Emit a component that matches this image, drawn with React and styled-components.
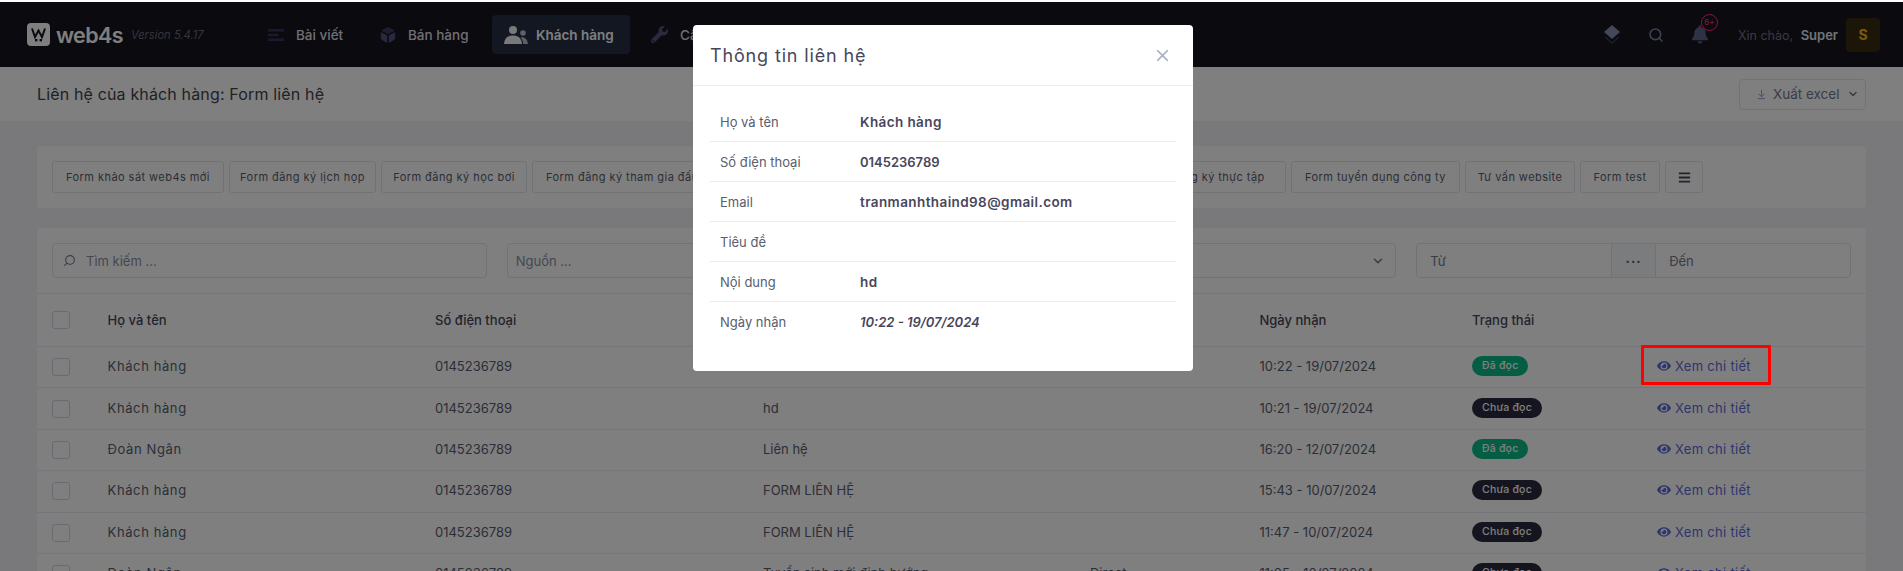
import React from "react";
import styled, { createGlobalStyle } from "styled-components";
import { FaEye, FaBell, FaWrench, FaBars } from "react-icons/fa";
import { Search, ChevronDown, X, ArrowDownToLine } from "lucide-react";

const GlobalStyle = createGlobalStyle`
  html, body {
    margin: 0;
    padding: 0;
    background: #fff;
    overflow: hidden;
  }
  * {
    box-sizing: border-box;
  }
  body {
    font-family: Inter, "Noto Sans", sans-serif;
    font-size: 13px;
    color: #595d6e;
  }
`;

const forms = [
  { label: "Form khảo sát web4s mới", w: 172 },
  { label: "Form đăng ký lịch họp", w: 147 },
  { label: "Form đăng ký học bơi", w: 146 },
  { label: "Form đăng ký tham gia đấu giá", w: 230, start: true },
  { label: "Form đăng ký tuyển sinh", w: 180 },
  { label: "Form đăng ký tư vấn", w: 160 },
  { label: "Form đăng ký thực tập", w: 169 },
  { label: "Form tuyển dụng công ty", w: 169 },
  { label: "Tư vấn website", w: 110 },
  { label: "Form test", w: 80 },
];

const rows = [
  { name: "Khách hàng", content: "hd", source: "", date: "10:22 - 19/07/2024", read: true },
  { name: "Khách hàng", content: "hd", source: "", date: "10:21 - 19/07/2024", read: false },
  { name: "Đoàn Ngân", content: "Liên hệ", source: "", date: "16:20 - 12/07/2024", read: true },
  { name: "Khách hàng", content: "FORM LIÊN HỆ", source: "", date: "15:43 - 10/07/2024", read: false },
  { name: "Khách hàng", content: "FORM LIÊN HỆ", source: "", date: "11:47 - 10/07/2024", read: false },
  { name: "Đoàn Ngân", content: "Tuyển sinh mới định hướng", source: "Direct", date: "11:05 - 10/07/2024", read: false },
];

const details = [
  { label: "Họ và tên", value: "Khách hàng" },
  { label: "Số điện thoại", value: "0145236789", numeric: true },
  { label: "Email", value: "tranmanhthaind98@gmail.com" },
  { label: "Tiêu đề", value: "" },
  { label: "Nội dung", value: "hd" },
  { label: "Ngày nhận", value: "10:22 - 19/07/2024", numeric: true, italic: true },
];

function LogoMark() {
  return (
    <svg width="23" height="23" viewBox="0 0 23 23">
      <rect width="23" height="23" rx="4" fill="#fff" />
      <path d="M5 5.5 L8 14 L11.5 7.5 L15 14 L18 5.5" fill="none" stroke="#14141e" strokeWidth="2" />
      <rect x="8" y="16" width="2.4" height="2.4" fill="#14141e" />
      <rect x="12.6" y="16" width="2.4" height="2.4" fill="#14141e" />
    </svg>
  );
}

function ListIcon() {
  return (
    <svg width="16" height="12" viewBox="0 0 16 12" fill="#34345a">
      <rect width="16" height="2.6" />
      <rect y="4.7" width="10.5" height="2.6" />
      <rect y="9.4" width="16" height="2.6" />
    </svg>
  );
}

function CubeIcon() {
  return (
    <svg width="16" height="16" viewBox="0 0 16 16">
      <path d="M8 0 L15 3.6 L8 7.2 L1 3.6 Z" fill="#3a3a5c" />
      <path d="M0.8 5 L7.2 8.4 V16 L2 13 Q0.8 12.2 0.8 11 Z" fill="#50507f" />
      <path d="M15.2 5 L8.8 8.4 V16 L14 13 Q15.2 12.2 15.2 11 Z" fill="#50507f" />
    </svg>
  );
}

function UsersIcon() {
  return (
    <svg width="24" height="18" viewBox="0 0 24 18" fill="#f2f2f8">
      <circle cx="9" cy="4" r="4" />
      <path d="M0 18 C0.5 11.5 4.5 9.5 9 9.5 C13.5 9.5 17.5 11.5 18 18 Z" />
      <circle cx="19" cy="7" r="2.8" opacity="0.75" />
      <path d="M19.2 18 C19 15 18 13 16.6 11.4 C20 10.4 23.4 12.5 24 18 Z" opacity="0.75" />
    </svg>
  );
}

function LayersIcon() {
  return (
    <svg width="16" height="19" viewBox="0 0 16 19">
      <path d="M8 0 L16 7 L8 14 L0 7 Z" fill="#8a8fb4" />
      <path d="M1 12 L8 18 L15 12" fill="none" stroke="#3a3d58" strokeWidth="1.4" />
    </svg>
  );
}

export default function App() {
  return (
    <>
      <GlobalStyle />
      <Page>
        <Header>
          <Brand>
            <LogoMark />
            <BrandName>web4s</BrandName>
            <Version>Version 5.4.17</Version>
          </Brand>
          <NavMenu>
            <NavItem $w={103}>
              <NavIcon $w={28}><ListIcon /></NavIcon>
              Bài viết
            </NavItem>
            <NavItem $w={115}>
              <NavIcon $w={28}><CubeIcon /></NavIcon>
              Bán hàng
            </NavItem>
            <NavItem $w={138} $active>
              <NavIcon $w={32}><UsersIcon /></NavIcon>
              Khách hàng
            </NavItem>
            <NavItem $w={130}>
              <NavIcon $w={29}><FaWrench size={17} color="#55557f" /></NavIcon>
              Cấu hình
            </NavItem>
          </NavMenu>
          <HeaderRight>
            <ToolIcon><LayersIcon /></ToolIcon>
            <ToolIcon><Search size={20} color="#7a7fa6" strokeWidth={2.4} /></ToolIcon>
            <ToolIcon>
              <FaBell size={19} color="#5e6288" />
              <NotifyBadge>6+</NotifyBadge>
            </ToolIcon>
            <Greeting>
              Xin chào, <strong>Super</strong>
            </Greeting>
            <Avatar>S</Avatar>
          </HeaderRight>
        </Header>

        <SubHeader>
          <PageTitle>Liên hệ của khách hàng: Form liên hệ</PageTitle>
          <ExportButton>
            <ArrowDownToLine size={11} color="#8b93c9" />
            <ExportLabel>Xuất excel</ExportLabel>
            <ChevronDown size={12} strokeWidth={3} />
          </ExportButton>
        </SubHeader>

        <Content>
          <FilterPanel>
            {forms.map((form) => (
              <FormButton key={form.label} $w={form.w} $start={form.start}>{form.label}</FormButton>
            ))}
            <FormButton $w={38}><FaBars size={13} color="#48465b" /></FormButton>
          </FilterPanel>

          <TablePanel>
            <SearchBar>
              <Field>
                <Search size={13} style={{ transform: "scaleX(-1)" }} />
                <FieldText>Tìm kiếm ...</FieldText>
              </Field>
              <Field $left={8}><FieldText>Nguồn ...</FieldText></Field>
              <Field $between>
                <FieldText>Trạng thái</FieldText>
                <ChevronDown size={14} strokeWidth={2.6} />
              </Field>
              <DateField>
                <DateInput>Từ</DateInput>
                <DateDots>···</DateDots>
                <DateInput>Đến</DateInput>
              </DateField>
            </SearchBar>

            <HeadRow>
              <CheckBox />
              <span>Họ và tên</span>
              <span>Số điện thoại</span>
              <span>Tiêu đề</span>
              <span>Nguồn</span>
              <span>Ngày nhận</span>
              <span>Trạng thái</span>
              <span />
            </HeadRow>
            {rows.map((row) => (
              <Row key={row.date}>
                <CheckBox />
                <NameCell>{row.name}</NameCell>
                <span>0145236789</span>
                <span>{row.content}</span>
                <span>{row.source}</span>
                <span>{row.date}</span>
                <span><StatusBadge $read={row.read}>{row.read ? "Đã đọc" : "Chưa đọc"}</StatusBadge></span>
                <DetailLink><FaEye size={14} /> Xem chi tiết</DetailLink>
              </Row>
            ))}
          </TablePanel>
        </Content>

        <Backdrop>
          <Modal>
            <ModalHeader>
              <ModalTitle>Thông tin liên hệ</ModalTitle>
              <X size={19} color="#a7abc3" strokeWidth={2.2} />
            </ModalHeader>
            <ModalBody>
              {details.map((item) => (
                <DetailRow key={item.label}>
                  <DetailLabel>{item.label}</DetailLabel>
                  <DetailValue $italic={item.italic} $numeric={item.numeric}>{item.value}</DetailValue>
                </DetailRow>
              ))}
            </ModalBody>
          </Modal>
        </Backdrop>

        <Highlight />
      </Page>
    </>
  );
}

const Page = styled.div`
  position: relative;
  margin-top: 2px;
  height: 569px;
  overflow: hidden;
  background: #f2f3f8;
`;

const Header = styled.div`
  height: 65px;
  display: flex;
  align-items: center;
  padding: 0 23px 0 27px;
  background: #14141e;
`;

const Brand = styled.div`
  flex: 0 0 229px;
  display: flex;
  align-items: center;
`;

const BrandName = styled.span`
  margin-left: 6px;
  font-size: 21.5px;
  font-weight: 600;
  letter-spacing: -0.6px;
  color: #fff;
`;

const Version = styled.span`
  margin-left: 8px;
  font-size: 11.2px;
  font-style: italic;
  color: #6b6b78;
`;

const NavMenu = styled.div`
  display: flex;
  gap: 9px;
`;

const NavItem = styled.div`
  width: ${(props) => props.$w}px;
  height: 39px;
  padding-left: 12px;
  display: flex;
  align-items: center;
  font-size: 13.5px;
  white-space: nowrap;
  border-radius: 4px;
  color: ${(props) => (props.$active ? "#ffffff" : "#dfdfe6")};
  font-weight: ${(props) => (props.$active ? 600 : 500)};
  background: ${(props) => (props.$active ? "#262e44" : "transparent")};
`;

const NavIcon = styled.span`
  flex: 0 0 ${(props) => props.$w}px;
  display: flex;
  align-items: center;
`;

const HeaderRight = styled.div`
  margin-left: auto;
  display: flex;
  align-items: center;
  gap: 28px;
`;

const ToolIcon = styled.span`
  position: relative;
  width: 16px;
  display: flex;
  align-items: center;
  justify-content: center;
`;

const NotifyBadge = styled.span`
  position: absolute;
  top: -11px;
  left: 9px;
  width: 17px;
  height: 17px;
  border: 1px solid #fd397a;
  border-radius: 50%;
  font-size: 8px;
  line-height: 15px;
  text-align: center;
  color: #fd397a;
`;

const Greeting = styled.div`
  margin-left: 2px;
  font-size: 12.5px;
  color: #72748a;
  white-space: nowrap;

  strong {
    margin-left: 4px;
    font-weight: 600;
    font-size: 13px;
    color: #e6e6ee;
  }
`;

const Avatar = styled.div`
  width: 34px;
  height: 34px;
  margin-left: -20px;
  border-radius: 4px;
  display: flex;
  align-items: center;
  justify-content: center;
  font-weight: 700;
  font-size: 14px;
  color: #f5b81e;
  background: #382c10;
`;

const SubHeader = styled.div`
  height: 54px;
  padding: 0 37px;
  display: flex;
  align-items: center;
  justify-content: space-between;
  background: #fff;
`;

const PageTitle = styled.h3`
  margin: 0;
  font-size: 16px;
  font-weight: 400;
  letter-spacing: 0.15px;
  color: #434349;
`;

const ExportButton = styled.div`
  width: 127px;
  height: 31px;
  padding-left: 16px;
  display: flex;
  align-items: center;
  font-size: 13.5px;
  color: #74788d;
  border: 1px solid #e2e5ec;
  border-radius: 4px;
`;

const ExportLabel = styled.span`
  margin: 0 8px 0 6px;
`;

const Content = styled.div`
  padding: 25px 37px 0;
`;

const FilterPanel = styled.div`
  height: 62px;
  padding: 15px;
  display: flex;
  gap: 5px;
  background: #fff;
  border-radius: 4px;
`;

const FormButton = styled.div`
  flex: 0 0 ${(props) => props.$w}px;
  height: 32px;
  padding-left: ${(props) => (props.$start ? "13px" : "0")};
  display: flex;
  align-items: center;
  justify-content: ${(props) => (props.$start ? "flex-start" : "center")};
  font-size: 11px;
  letter-spacing: 0.45px;
  white-space: nowrap;
  overflow: hidden;
  color: #595d6e;
  background: #fff;
  border: 1px solid #e2e5ec;
  border-radius: 3px;
`;

const TablePanel = styled.div`
  margin-top: 20px;
  background: #fff;
  border-radius: 4px;
`;

const SearchBar = styled.div`
  padding: 15px;
  display: grid;
  grid-template-columns: repeat(4, 1fr);
  gap: 20px;
  border-bottom: 1px solid #ebedf2;
`;

const Field = styled.div`
  height: 35px;
  padding: 0 10px 0 ${(props) => props.$left ?? 10}px;
  display: flex;
  align-items: center;
  justify-content: ${(props) => (props.$between ? "space-between" : "flex-start")};
  gap: 10px;
  color: #74788d;
  border: 1px solid #e2e5ec;
  border-radius: 4px;
`;

const FieldText = styled.span`
  font-size: 13px;
  color: #8a8fa3;
`;

const DateField = styled(Field)`
  padding: 0;
  gap: 0;
  align-items: stretch;
`;

const DateInput = styled.span`
  flex: 1;
  padding-left: 13px;
  display: flex;
  align-items: center;
  font-size: 13px;
  color: #74788d;
`;

const DateDots = styled.span`
  flex: 0 0 45px;
  display: flex;
  align-items: center;
  justify-content: center;
  font-weight: 700;
  letter-spacing: 1px;
  color: #595d6e;
  background: #f7f8fa;
  border-left: 1px solid #e2e5ec;
  border-right: 1px solid #e2e5ec;
`;

const columns = "55.6px 327.4px 328px 327px 169.5px 212.5px 185px 1fr";

const CheckBox = styled.span`
  width: 18px;
  height: 18px;
  border: 1px solid #d1d7e2;
  border-radius: 3px;
`;

const HeadRow = styled.div`
  height: 53px;
  padding-left: 15px;
  display: grid;
  grid-template-columns: ${columns};
  align-items: center;
  font-size: 13px;
  font-weight: 500;
  white-space: nowrap;
  color: #48465b;
  border-bottom: 1px solid #ebedf2;
`;

const Row = styled(HeadRow)`
  height: 41.4px;
  padding-bottom: 2px;
  font-weight: 400;
  color: #595d6e;

  ${CheckBox} {
    margin-top: 2px;
  }
`;

const NameCell = styled.span`
  letter-spacing: 0.6px;
`;

const StatusBadge = styled.span`
  display: inline-block;
  height: 20px;
  padding: 0 10px;
  font-size: 10.5px;
  font-weight: 500;
  letter-spacing: 0.2px;
  line-height: 20px;
  border-radius: 10px;
  color: #fff;
  background: ${(props) => (props.$read ? "#0abb87" : "#282a3c")};
`;

const DetailLink = styled.span`
  display: flex;
  align-items: center;
  gap: 4px;
  letter-spacing: 0.3px;
  color: #5d68d8;
`;

const Backdrop = styled.div`
  position: absolute;
  inset: 0;
  padding: 23px 0 0 693px;
  background: rgba(0, 0, 0, 0.5);
`;

const Modal = styled.div`
  width: 500px;
  height: 346px;
  background: #fff;
  border-radius: 4px;
`;

const ModalHeader = styled.div`
  height: 61px;
  padding: 0 21px 0 17px;
  display: flex;
  align-items: center;
  justify-content: space-between;
  border-bottom: 1px solid #ebedf2;
`;

const ModalTitle = styled.h5`
  margin: 0;
  font-size: 18px;
  font-weight: 400;
  letter-spacing: 0.85px;
  color: #48465b;
`;

const ModalBody = styled.div`
  padding: 16px 17px;
`;

const DetailRow = styled.div`
  height: 40px;
  padding-left: 10px;
  display: flex;
  align-items: center;
  font-size: 13px;
  border-bottom: 1px solid #ebedf2;

  &:last-child {
    border-bottom: none;
  }
`;

const DetailLabel = styled.span`
  flex: 0 0 140px;
  color: #595d6e;
`;

const DetailValue = styled.span`
  font-size: ${(props) => (props.$numeric ? 13 : 13.5)}px;
  font-weight: 600;
  letter-spacing: ${(props) => (props.$numeric ? 0 : 0.4)}px;
  font-style: ${(props) => (props.$italic ? "italic" : "normal")};
  color: #48465b;
`;

const Highlight = styled.div`
  position: absolute;
  left: 1641px;
  top: 343px;
  width: 130px;
  height: 40px;
  border: 3px solid #f00;
  border-radius: 1px;
`;
